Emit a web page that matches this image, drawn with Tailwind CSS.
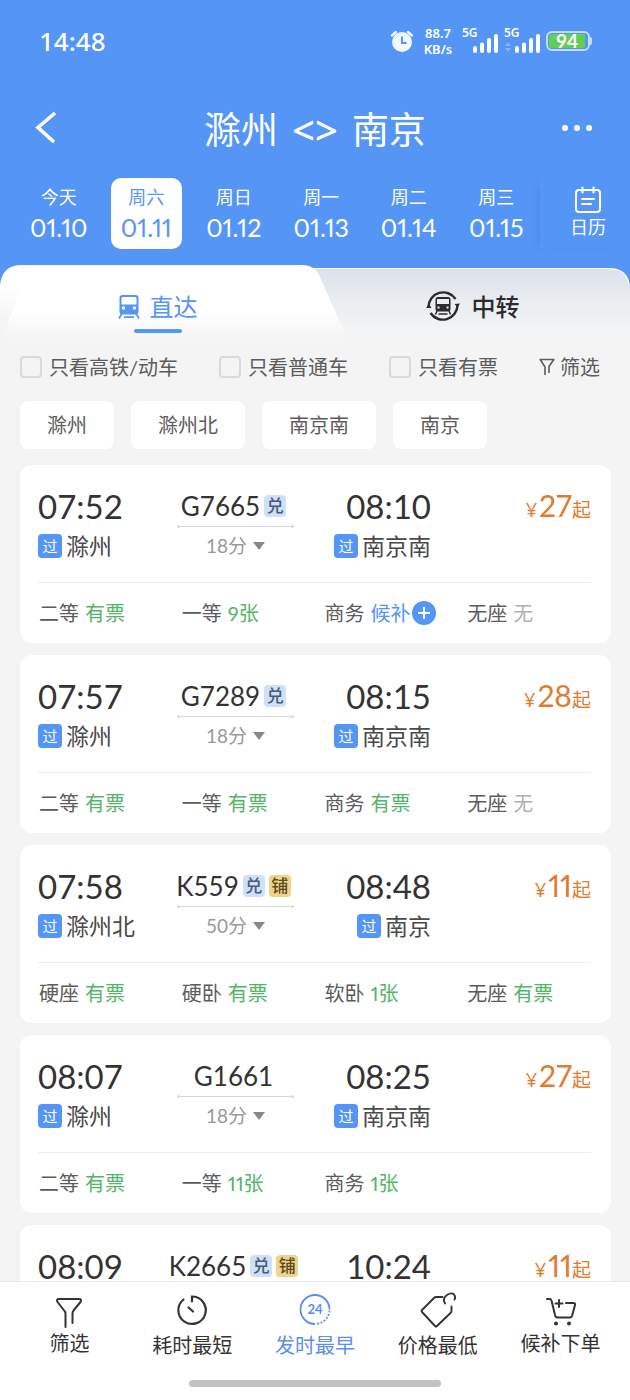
<!DOCTYPE html>
<html lang="zh-CN">
<head>
<meta charset="utf-8">
<meta name="viewport" content="width=device-width, initial-scale=1">
<title>滁州 - 南京</title>
<script src="https://cdn.jsdelivr.net/npm/@tailwindcss/browser@4"></script>
</head>
<body class="flex h-screen flex-col overflow-hidden bg-[#f4f4f4] font-['Lato','Noto_Sans_CJK_SC',sans-serif] text-[#333]">

<header class="shrink-0 bg-[#5595f6] text-white">
  <div class="flex h-[82px] items-center justify-between pr-[38px] pl-[39px]">
    <time class="font-['Noto_Sans'] text-[26px] leading-8 font-medium">14:48</time>
    <div class="flex items-center gap-2">
      <svg class="h-6 w-6" viewBox="0 0 24 24" fill="none">
        <circle cx="12" cy="13" r="10" fill="#f2f8ff"/>
        <path d="M2 6.5 6 3M22 6.5 18 3" stroke="#f2f8ff" stroke-width="2.4" stroke-linecap="round"/>
        <path d="M12 7.5V14h4.500" stroke="#5595f6" stroke-width="2"/>
      </svg>
      <div class="flex w-8 flex-col items-center font-['Noto_Sans'] text-[13px] leading-4 font-semibold"><span>88.7</span><span>KB/s</span></div>
      <div class="flex">
        <div class="relative h-7 w-[42px]">
          <span class="absolute top-0 left-0 font-['Noto_Sans'] text-[12px] leading-3 font-semibold">5G</span>
          <svg class="h-7 w-[42px]" viewBox="0 0 42 28" stroke="#fff" stroke-width="4" stroke-linecap="round"><path d="M13 21v3M20 17.500v6.500M27 13v11M34 9v15"/></svg>
        </div>
        <div class="relative h-7 w-[34px]">
          <span class="absolute top-0 left-0 font-['Noto_Sans'] text-[12px] leading-3 font-semibold">5G</span>
          <svg class="h-7 w-9" viewBox="0 0 36 28"><path d="M1 19 4 15l3 4zM1 21l3 4 3-4z" fill="#86b4f9"/><path d="M13 21v3M20 17.500v6.500M27 13v11M34 9v15" stroke="#fff" stroke-width="4" stroke-linecap="round"/></svg>
        </div>
      </div>
      <div class="flex items-center">
        <div class="flex h-5 w-11 rounded-md border-2 border-[#c4dcff] p-px">
          <div class="h-full w-9 rounded-xs bg-[#63ce57] text-center text-[19px] leading-[14px] font-bold">94</div>
        </div>
        <div class="h-2 w-[2px] rounded-r bg-[#c4dcff]"></div>
      </div>
    </div>
  </div>

  <div class="grid h-24 grid-cols-[80px_1fr_80px] items-center">
    <button type="button" aria-label="返回" class="pb-1 pl-8">
      <svg class="h-9 w-7" viewBox="0 0 28 36" fill="none" stroke="#fff" stroke-width="3.600"><path d="M23 3 6 17.500 22 32"/></svg>
    </button>
    <h1 class="flex justify-center gap-[14px] text-[37px] leading-12 whitespace-nowrap"><span>滁州</span><span class="font-['Noto_Sans'] text-[40px] font-medium">&lt;&gt;</span><span>南京</span></h1>
    <button type="button" aria-label="更多" class="flex gap-[6px] pb-1 pl-3">
      <span class="h-[6px] w-[6px] rounded-full bg-white"></span><span class="h-[6px] w-[6px] rounded-full bg-white"></span><span class="h-[6px] w-[6px] rounded-full bg-white"></span>
    </button>
  </div>

  <div class="flex pb-4 pl-[15px]">
    <nav id="dates" aria-label="日期" class="grid flex-1 grid-cols-6 proportional-nums"></nav>
    <button type="button" class="flex w-[90px] flex-col items-center pt-2 pl-[6px] shadow-[-8px_2px_8px_-6px_rgba(50,100,200,0.25)]">
      <svg class="h-7 w-7" viewBox="0 0 28 28" fill="none" stroke="#fff" stroke-width="2" stroke-linecap="round"><rect x="2" y="4" width="24" height="22" rx="3"/><path d="M8.500 1.500v5M19.500 1.500v5M8 13h12M8 18h9"/></svg>
      <span class="mt-px text-[18px] leading-6">日历</span>
    </button>
  </div>
</header>

<div class="relative shrink-0 bg-[#5595f6]" role="tablist">
  <svg class="absolute inset-0 h-full w-full" viewBox="0 0 630 75" preserveAspectRatio="none">
    <defs>
      <linearGradient id="far" x1="0" y1="0" x2="0" y2="1"><stop offset="0" stop-color="#dce2eb"/><stop offset=".85" stop-color="#f3f4f5"/><stop offset="1" stop-color="#f4f4f4"/></linearGradient>
      <linearGradient id="edge" x1="0" y1="0" x2="0" y2="1"><stop offset=".3" stop-color="#fff"/><stop offset=".7" stop-color="#f4f5f6"/><stop offset="1" stop-color="#f4f4f4"/></linearGradient>
      <linearGradient id="near" x1="0" y1="0" x2="0" y2="1"><stop offset=".6" stop-color="#fff"/><stop offset="1" stop-color="#f4f4f4"/></linearGradient>
    </defs>
    <path d="M300 3H609Q630 3 630 24V75H300Z" fill="url(#far)"/>
    <path d="M300 3.500H609Q626 3.500 629.500 20" fill="none" stroke="#fff"/>
    <path d="M0 75V20Q2 0 22 0H200V75Z" fill="url(#edge)"/>
    <path d="M2 75 18 30 22 0H303Q314 0 319 10L348 75Z" fill="url(#near)"/>
  </svg>
  <div class="relative grid h-[75px] grid-cols-2">
    <button type="button" role="tab" aria-selected="true" class="flex flex-col items-center pt-6 text-[#5595f6]">
      <span class="flex items-center gap-[10px] text-[24px] leading-9">
        <svg class="h-6 w-[22px]" viewBox="0 0 22 24"><path fill="currentColor" fill-rule="evenodd" d="M4.500 0h13Q20.500 0 20.500 3V16.500q0 3-3 3h-13q-3 0-3-3V3Q1.500 0 4.500 0ZM5 2Q3.500 2 3.500 3.500V9.500h15V3.500Q18.500 2 17 2Z"/><circle cx="5.500" cy="13" r="1.700" fill="#fff"/><circle cx="16.500" cy="13" r="1.700" fill="#fff"/><path d="M4 18.500 1 23.500M18 18.500l3 5M6 22.200h10" stroke="currentColor" stroke-width="1.800"/></svg>
        直达
      </span>
      <span class="mt-1 h-1 w-12 rounded-full bg-[#5595f6]"></span>
    </button>
    <button type="button" role="tab" aria-selected="false" class="flex items-start justify-center gap-3 pt-6 text-[24px] leading-9 font-medium text-[#2b2b2f]">
      <svg class="h-[34px] w-[34px]" viewBox="0 0 34 34" fill="none" stroke="currentColor"><path d="M2.500 18A14.700 14.700 0 0 1 29.500 10M31.500 16A14.700 14.700 0 0 1 4.500 24" stroke-width="2.400"/><path d="m0 19 3-4 2.500 4zM28.500 15l5.500-.5-2.500 4z" fill="currentColor" stroke="none"/><path fill="currentColor" stroke="none" fill-rule="evenodd" d="M12 8h10q2.500 0 2.500 2.500V20q0 2.500-2.500 2.500H12q-2.500 0-2.500-2.500v-9.500Q9.500 8 12 8ZM11 10v5h12V10ZM11.500 17.500v2h2V17.500ZM20.500 17.500v2h2V17.500Z"/><path d="m11 22-1.500 3.500M23 22l1.500 3.500M12.500 25h9" stroke-width="1.500"/></svg>
      中转
    </button>
  </div>
</div>

<form class="flex shrink-0 items-center justify-between pt-[11px] pr-[30px] pb-[18px] pl-5 text-[20px] leading-8 whitespace-nowrap text-[#5c5c5c]">
  <label class="flex items-center gap-[7px]"><input type="checkbox" class="h-[22px] w-[22px] appearance-none rounded-sm border-2 border-[#dadada]">只看高铁/动车</label>
  <label class="flex items-center gap-[7px]"><input type="checkbox" class="h-[22px] w-[22px] appearance-none rounded-sm border-2 border-[#dadada]">只看普通车</label>
  <label class="flex items-center gap-[7px]"><input type="checkbox" class="h-[22px] w-[22px] appearance-none rounded-sm border-2 border-[#dadada]">只看有票</label>
  <button type="button" class="flex items-center gap-[5px]"><svg class="h-[18px] w-4" viewBox="0 0 16 18" fill="none" stroke="currentColor" stroke-width="1.600" stroke-linejoin="round" stroke-linecap="round"><path d="M6 16.500V9L1.200 1.500h13.600L10 8.500V14.500"/></svg>筛选</button>
</form>

<div class="flex shrink-0 gap-[17px] px-5 text-[20px] leading-12 text-[#5c5c5c]">
  <button type="button" class="rounded-lg bg-white px-[27px]">滁州</button>
  <button type="button" class="rounded-lg bg-white px-[27px]">滁州北</button>
  <button type="button" class="rounded-lg bg-white px-[27px]">南京南</button>
  <button type="button" class="rounded-lg bg-white px-[27px]">南京</button>
</div>

<main id="trains" class="mt-4 flex min-h-0 flex-1 flex-col gap-3 overflow-hidden pr-[19px] pl-5"></main>

<footer class="shrink-0 border-t border-[#e8e8e8] bg-white">
  <nav class="grid grid-cols-5 px-2 pt-2 text-[20px] leading-7 whitespace-nowrap text-[#333]">
    <button type="button" class="flex flex-col items-center pt-1">
      <svg class="h-9 w-9" viewBox="0 0 36 36" fill="none" stroke="currentColor" stroke-width="2" stroke-linecap="round" stroke-linejoin="round"><path d="M14.500 33V19.500Q14.500 18 13.500 17L6.500 8Q5 5 8 5H28Q31 5 29.500 8L22.500 16.500Q21.500 18 21.500 19.500V29"/></svg>
      <span class="-mt-px">筛选</span>
    </button>
    <button type="button" class="flex flex-col items-center">
      <svg class="mt-[2px] h-9 w-9" viewBox="0 0 36 36" fill="none" stroke="currentColor" stroke-width="2.200" stroke-linecap="round"><path d="M9.500 7.500A13.700 13.700 0 1 0 18 4.500V9.500M14.500 15.500l4.500 4"/></svg>
      <span class="mt-[3px]">耗时最短</span>
    </button>
    <button type="button" aria-pressed="true" class="flex flex-col items-center text-[#5b8eee]">
      <svg class="mt-[2px] h-9 w-9" viewBox="0 0 36 36" fill="none" stroke="currentColor" stroke-width="1.800"><path d="M18 32A14.500 14.500 0 1 1 32.500 17.500"/><path d="M32.500 18.500A14.500 14.500 0 0 1 19 32" stroke-dasharray="2 1.500"/><text x="18" y="22" text-anchor="middle" font-size="13" font-weight="700" fill="currentColor" stroke="none">24</text></svg>
      <span class="mt-[3px]">发时最早</span>
    </button>
    <button type="button" class="flex flex-col items-center">
      <svg class="mt-[2px] h-9 w-9 overflow-visible" viewBox="0 0 36 36" fill="none" stroke="currentColor" stroke-width="1.900" stroke-linecap="round" stroke-linejoin="round"><path d="M22.500 5H16Q15 5 14 6L2 18Q1 19 2 20L15 34Q16 35 17 34L30.500 21Q31.500 20 31.500 19V14.500"/><path d="M25 11.500Q22 6.500 27 3Q31.500 0 34 2.500Q36 5 34.500 7.500"/></svg>
      <span class="mt-[3px]">价格最低</span>
    </button>
    <button type="button" class="flex flex-col items-center pt-1">
      <svg class="h-9 w-9" viewBox="0 0 36 36" fill="none" stroke="currentColor" stroke-width="2" stroke-linecap="round" stroke-linejoin="round"><path d="M4 5H6.500Q8 5 8.500 6.500L12 21Q12.700 23.500 14.500 23.500H27Q28.500 23.500 29 22L32 11Q32.500 9 30.500 9H23M16 6v7M12.500 9.500H19.500"/><circle cx="13" cy="29.500" r="1" fill="currentColor"/><circle cx="26" cy="29.500" r="1" fill="currentColor"/></svg>
      <span class="-mt-px">候补下单</span>
    </button>
  </nav>
  <div class="mx-auto mt-[21px] mb-[13px] h-[7px] w-2/5 rounded-full bg-[#c3c3c3]"></div>
</footer>

<script>
const dates = [['今天', '01.10'], ['周六', '01.11', true], ['周日', '01.12'], ['周一', '01.13'], ['周二', '01.14'], ['周三', '01.15']];
document.getElementById('dates').innerHTML = dates.map(([day, date, on]) => `
  <button type="button" class="mx-2 flex flex-col items-center rounded-[10px] pt-[5px] pb-[5px] ${on ? 'bg-white text-[#5595f6]' : ''}">
    <span class="text-[18px] leading-7">${day}</span>
    <span class="text-[25px] leading-[33px]">${date}</span>
  </button>`).join('');

const trains = [
  { dep: '07:52', from: '滁州', no: 'G7665', tags: '兑', dur: '18分', arr: '08:10', to: '南京南', price: 27, seats: [['二等', '有票'], ['一等', '9张'], ['商务', '候补'], ['无座', '无']] },
  { dep: '07:57', from: '滁州', no: 'G7289', tags: '兑', dur: '18分', arr: '08:15', to: '南京南', price: 28, seats: [['二等', '有票'], ['一等', '有票'], ['商务', '有票'], ['无座', '无']] },
  { dep: '07:58', from: '滁州北', no: 'K559', tags: '兑铺', dur: '50分', arr: '08:48', to: '南京', price: 11, seats: [['硬座', '有票'], ['硬卧', '有票'], ['软卧', '1张'], ['无座', '有票']] },
  { dep: '08:07', from: '滁州', no: 'G1661', tags: '', dur: '18分', arr: '08:25', to: '南京南', price: 27, seats: [['二等', '有票'], ['一等', '11张'], ['商务', '1张']] },
  { dep: '08:09', no: 'K2665', tags: '兑铺', arr: '10:24', price: 11 },
];
const pass = '<span class="h-6 w-6 rounded-sm bg-[#5595f6] text-center text-[15px] leading-6 text-white">过</span>';
const tag = t => `<span class="h-[22px] w-[22px] rounded-sm text-center text-[17px] leading-[22px] font-medium ${t === '兑' ? 'bg-[#cfe0fb] text-[#4b5a78]' : 'bg-[#efd38c] text-[#5d4a20]'}">${t}</span>`;
const tone = s => s === '无' ? 'text-[#b0b0b0]' : s === '候补' ? 'text-[#5595f6]' : 'text-[#54b468]';
const plus = '<svg class="-ml-1 h-6 w-6" viewBox="0 0 24 24"><circle cx="12" cy="12" r="12" fill="#5595f6"/><path d="M6 12h12M12 6v12" stroke="#fff" stroke-width="2"/></svg>';
const station = s => s ? `<div class="mt-2 flex h-7 items-center gap-1 text-[23px] leading-7 text-[#4a4a4a]">${pass}${s}</div>` : '';
const duration = d => d ? `<div class="mt-1 flex h-7 items-center gap-[6px] text-[19px] leading-7 text-[#999]">${d}<svg class="h-2 w-3" viewBox="0 0 12 8"><path d="M0 0h12L6 8z" fill="#888"/></svg></div>` : '';
const seatRow = seats => seats ? `
    <div class="grid grid-cols-[143fr_143fr_143fr_124fr] py-4 pl-px text-[20px] leading-7 text-[#5c5c5c]">
      ${seats.map(([k, v]) => `<div class="flex items-center gap-[6px] proportional-nums">${k}<span class="${tone(v)}">${v}</span>${v === '候补' ? plus : ''}</div>`).join('')}
    </div>` : '';

document.getElementById('trains').innerHTML = trains.map(t => `
  <article class="shrink-0 rounded-xl bg-white pr-5 pl-[18px] whitespace-nowrap">
    <div class="grid grid-cols-[minmax(0,139fr)_minmax(0,117fr)_minmax(0,137fr)_minmax(0,160fr)] border-b border-[#ececec] pt-[25px] pb-[22px]">
      <div>
        <div class="pb-[2px] text-[33px] leading-8">${t.dep}</div>
        ${station(t.from)}
      </div>
      <div class="flex flex-col items-center">
        <div class="flex h-[35px] items-center justify-center gap-1 pr-1 pb-1 text-[26px] leading-8">${t.no}${[...t.tags].map(tag).join('')}</div>
        <div class="flex w-full items-center"><span class="h-[3px] w-[3px] rounded-full bg-[#d8d8d8]"></span><span class="h-px flex-1 bg-[#d8d8d8]"></span><span class="h-[3px] w-[3px] rounded-full bg-[#d8d8d8]"></span></div>
        ${duration(t.dur)}
      </div>
      <div class="flex flex-col items-end">
        <div class="pb-[2px] text-[33px] leading-8">${t.arr}</div>
        ${station(t.to)}
      </div>
      <div class="flex items-baseline justify-end text-[19px] leading-[30px] text-[#e07b30]"><span class="mr-[2px] font-['Open_Sans'] text-[20px] font-medium">¥</span><span class="text-[30px] proportional-nums">${t.price}</span>起</div>
    </div>${seatRow(t.seats)}
  </article>`).join('');
</script>
</body>
</html>
